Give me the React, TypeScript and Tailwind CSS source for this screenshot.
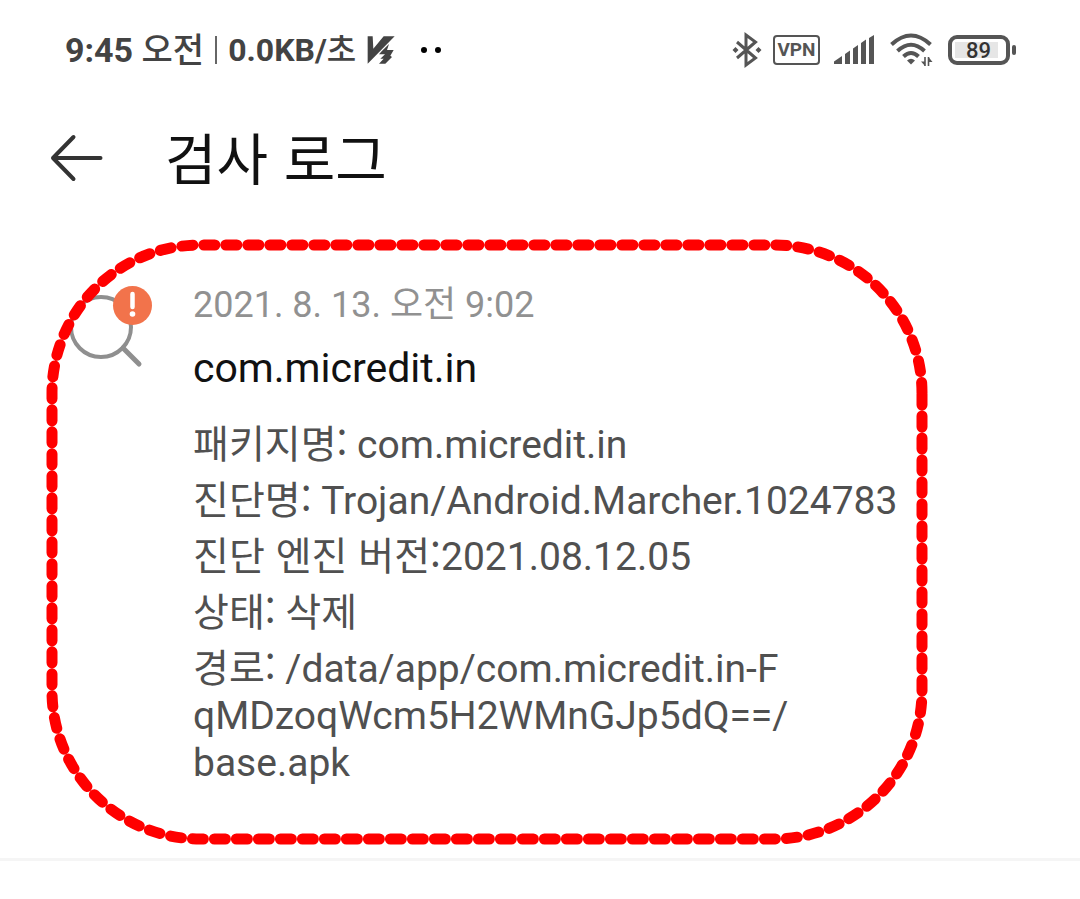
import React from "react";

const details: { label: string; value: React.ReactNode }[] = [
  { label: "패키지명:", value: " com.micredit.in" },
  { label: "진단명:", value: " Trojan/Android.Marcher.1024783" },
  { label: "진단 엔진 버전:", value: "2021.08.12.05" },
  { label: "상태:", value: " 삭제" },
  {
    label: "경로:",
    value: (
      <>
        {" /data/app/com.micredit.in-F"}
        <br />
        qMDzoqWcm5H2WMnGJp5dQ==/
        <br />
        base.apk
      </>
    ),
  },
];

function V3Icon() {
  return (
    <svg width="28" height="28" viewBox="0 0 84 84" fill="#434343" aria-hidden="true">
      <path d="M2 1H17L19 38L50 1H83L2 83Z" />
      <path d="M66 24L60 42H80L70 59L75 63L55 83H36L50 68H40L54 55H36L44 46Z" />
    </svg>
  );
}

function BluetoothIcon() {
  return (
    <svg width="30" height="36" viewBox="0 0 30 36" fill="none" stroke="#555" strokeWidth="3" aria-hidden="true">
      <path d="M5 10L23.500 26L14 33V3L23.500 10L5 26" strokeLinejoin="miter" />
      <path d="M3.500 15L6.500 18L3.500 21L0.500 18ZM26.500 15L29.500 18L26.500 21L23.500 18Z" fill="#555" stroke="none" />
    </svg>
  );
}

function SignalIcon() {
  return (
    <svg width="41" height="30" viewBox="0 0 41 30" fill="#555" aria-hidden="true">
      <path d="M0 29V26.500L8 21V29ZM11 19L16 15.500V29H11ZM19 13.500L24 10V29H19ZM27 8L32 4.500V29H27ZM35 3L40 0V29H35Z" />
    </svg>
  );
}

function WifiIcon() {
  return (
    <svg width="43" height="34" viewBox="0 0 43 34" fill="none" stroke="#555" strokeWidth="4" aria-hidden="true">
      <path d="M1.500 11.500Q21 -6.500 40.500 11.500" />
      <path d="M7.500 18Q21 5.500 34.500 18" />
      <path d="M13.500 23.500Q21 16.500 28.500 23.500" />
      <path d="M17 27.500Q21 24 25 27.500L21 31.500Z" fill="#555" stroke="none" />
      <path d="M35 24V33M38.500 24V33" strokeWidth="1.600" />
      <path d="M35 33L31 28.500H35ZM38.500 24L42.500 29H38.500Z" fill="#555" stroke="none" />
    </svg>
  );
}

function StatusBar() {
  return (
    <header className="flex h-[100px] items-center justify-between pl-[65px] pr-16 font-bold text-[#434343]">
      <div className="flex items-center whitespace-pre">
        <span className="text-[34px]">
          9:45 <span className="font-medium">오전</span>
        </span>
        <span className="mx-[11px] h-7 w-[2px] bg-[#666]" />
        <span className="mr-[11px] text-[32px]">
          0.0KB/<span className="font-medium">초</span>
        </span>
        <V3Icon />
        <span className="ml-[26px] flex gap-2">
          <span className="size-[6px] rounded-full bg-black" />
          <span className="size-[6px] rounded-full bg-black" />
        </span>
      </div>
      <div className="flex items-center">
        <BluetoothIcon />
        <span className="ml-[11px] flex h-[30px] w-[47px] items-center justify-center rounded-[4px] border-2 border-[#555] text-[19px] text-[#555]">
          VPN
        </span>
        <span className="ml-[14px]">
          <SignalIcon />
        </span>
        <span className="ml-[15px]">
          <WifiIcon />
        </span>
        <span className="ml-[15px] flex h-[30px] w-[62px] items-center rounded-[9px] border-4 border-[#555] p-[3px]">
          <span className="flex h-4 w-[43px] items-center justify-center bg-[#e6e6e6] pl-1 text-[22px] font-medium text-[#333]">
            89
          </span>
        </span>
        <span className="ml-[2px] h-[10px] w-1 rounded-[2px] bg-[#555]" />
      </div>
    </header>
  );
}

function ScanIcon() {
  return (
    <svg className="mt-1 shrink-0" width="84" height="84" viewBox="0 0 84 84" fill="none" stroke="#8f8f8f" aria-hidden="true">
      <circle cx="33" cy="42" r="30" strokeWidth="4" />
      <path d="M55 63L71 79" strokeWidth="5" strokeLinecap="round" />
      <circle cx="64.500" cy="20.500" r="19.500" fill="#f2734b" stroke="none" />
      <path d="M64.500 9V22" stroke="#fff" strokeWidth="4.500" strokeLinecap="round" />
      <circle cx="64.500" cy="29" r="2.800" fill="#fff" stroke="none" />
    </svg>
  );
}

function Highlight() {
  return (
    <svg
      className="pointer-events-none absolute left-[46px] top-[23px]"
      width="882"
      height="606"
      viewBox="46 239 882 606"
      fill="none"
      aria-hidden="true"
    >
      <path
        d="M922 394V691A148 148 0 0 1 774 839H200A148 148 0 0 1 52 691V393A148 148 0 0 1 200 245H774A148 148 0 0 1 922 393"
        stroke="#f00"
        strokeWidth="11"
        strokeLinecap="round"
        strokeDasharray="11 11"
      />
    </svg>
  );
}

export default function App() {
  return (
    <div className="min-h-screen bg-white font-['Roboto','Noto_Sans_CJK_KR',sans-serif]" lang="ko">
      <StatusBar />
      <div className="flex h-[116px] items-center pl-[50px]">
        <button type="button" aria-label="뒤로" className="mr-[62px]">
          <svg width="53" height="48" viewBox="0 0 53 48" fill="none" stroke="#333" strokeWidth="4" strokeLinecap="round" strokeLinejoin="round">
            <path d="M50.500 24H3M23.500 3L3 24L23.500 45" />
          </svg>
        </button>
        <h1 className="pb-1 font-['Noto_Sans_CJK_KR',sans-serif] text-[56px] leading-[80px] text-[#111]">검사 로그</h1>
      </div>
      <main className="relative">
        <Highlight />
        <article className="flex items-start gap-[41px] border-b-[3px] border-[#f5f5f5] pb-[71px] pl-[68px] pt-[65px]">
          <ScanIcon />
          <div>
            <time className="block text-[36px] leading-[48px] text-[#919191]" dateTime="2021-08-13T09:02">
              2021. 8. 13. 오전 9:02
            </time>
            <h2 className="mt-4 text-[41px] leading-[47px] text-[#111]">com.micredit.in</h2>
            <div className="mt-[30px] flex flex-col gap-[9px] text-[39px] leading-[47px] text-[#505050]">
              {details.map((item) => (
                <p key={item.label}>
                  <span className="font-['Noto_Sans_CJK_KR',sans-serif] leading-none">{item.label}</span>
                  {item.value}
                </p>
              ))}
            </div>
          </div>
        </article>
      </main>
    </div>
  );
}
